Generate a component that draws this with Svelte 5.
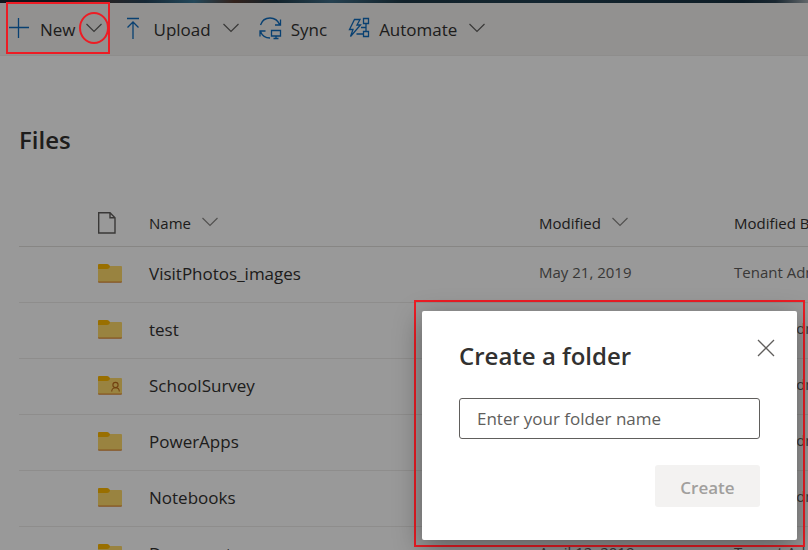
<script>
  const files = [
    { name: 'VisitPhotos_images', modified: 'May 21, 2019', by: 'Tenant Admin' },
    { name: 'test', modified: 'May 14, 2019', by: 'Tenant Admin' },
    { name: 'SchoolSurvey', modified: 'May 7, 2019', by: 'Tenant Admin', shared: true },
    { name: 'PowerApps', modified: 'April 30, 2019', by: 'Tenant Admin' },
    { name: 'Notebooks', modified: 'April 22, 2019', by: 'Tenant Admin' },
    { name: 'Documents', modified: 'April 12, 2019', by: 'Tenant Admin' }
  ];
  let folderName = $state('');
</script>

{#snippet chevron()}
  <svg class="chevron" width="16" height="12" viewBox="0 0 16 12" aria-hidden="true">
    <path d="M.5 1 8 8.500 15.500 1" />
  </svg>
{/snippet}

<div class="page">
  <div class="banner"></div>
  <nav class="toolbar">
    <div class="marked">
      <button type="button" class="command">
        <svg class="line" width="20" height="22" viewBox="0 0 20 22" aria-hidden="true"><path d="M9.500 0v20M0 9.500h20" /></svg>
        <span>New</span>
      </button>
      <button type="button" class="split" aria-label="More new items">{@render chevron()}</button>
    </div>
    <button type="button" class="command upload">
      <svg class="line" width="14" height="24" viewBox="0 0 14 24" aria-hidden="true"><path d="M1 1.500h12M7 22V5M1.500 10.500 7 5l5.500 5.500" /></svg>
      <span>Upload</span>
      {@render chevron()}
    </button>
    <button type="button" class="command sync">
      <svg class="line" width="23" height="24" viewBox="0 0 23 24" aria-hidden="true">
        <path d="M1.500 8C3 3.500 6.500 1 11 1c4.500 0 8 2.500 10 7M21.500 2.500V8H16M6.500 14H1v5.500M1.500 14.500C3 18.500 6.500 21 11 21M12.500 13.500h9v5.500h-9zM17 19v2.500M14.500 21.500h5" />
      </svg>
      <span>Sync</span>
    </button>
    <button type="button" class="command automate">
      <svg class="line" width="22" height="24" viewBox="0 0 22 24" aria-hidden="true">
        <path d="M6.500 2.500h5.500L9 8h3.500L2.500 19.500 5 12.500H1.500zM15.500 1.500h5v5h-5zM15.500 14.500h5v5h-5zM18 6.500v8M13 10.500h5M15.500 17H8.500" />
      </svg>
      <span>Automate</span>
      {@render chevron()}
    </button>
  </nav>

  <main>
    <h1>Files</h1>
    <table>
      <colgroup><col class="c-select" /><col class="c-icon" /><col /><col class="c-meta" /><col class="c-meta" /></colgroup>
      <thead>
        <tr>
          <td></td>
          <th scope="col" aria-label="File type">
            <svg class="file" width="18" height="22" viewBox="0 0 18 22" aria-hidden="true"><path d="M.7.700h11.300l5 5v15.300H.7zM12 .700v5h5" /></svg>
          </th>
          <th scope="col"><span class="head">Name {@render chevron()}</span></th>
          <th scope="col"><span class="head">Modified {@render chevron()}</span></th>
          <th scope="col"><span class="head">Modified By</span></th>
        </tr>
      </thead>
      <tbody>
        {#each files as file}
          <tr>
            <td></td>
            <td>
              <svg class="folder" width="24" height="20" viewBox="0 0 24 20" aria-hidden="true">
                <path fill="#ffda6b" d="M0 2h23q1 0 1 1v15H0z" />
                <path fill="#ffb900" d="M0 1q0-1 1-1h8c1.500 0 3 1.500 3 2.500S10.500 5 9 5H0z" />
                <path fill="#e08a35" d="M0 17.500h24q0 1.200-1 1.200H1q-1 0-1-1.200z" />
                {#if file.shared}
                  <g fill="none" stroke="#bd6b1a" stroke-width="1.100"><circle cx="17.500" cy="9" r="2.600" /><path d="M13.700 15.500c0-5 7.600-5 7.600 0" /></g>
                {/if}
              </svg>
            </td>
            <td><a href="#files">{file.name}</a></td>
            <td class="meta">{file.modified}</td>
            <td class="meta">{file.by}</td>
          </tr>
        {/each}
      </tbody>
    </table>
  </main>

  <div class="overlay">
    <div class="highlight">
      <div class="dialog" role="dialog" aria-modal="true" aria-labelledby="dialog-title">
        <header>
          <h2 id="dialog-title">Create a folder</h2>
          <button type="button" class="close" aria-label="Close">
            <svg width="18" height="18" viewBox="0 0 18 18" aria-hidden="true"><path d="m1 1 16 16M17 1 1 17" /></svg>
          </button>
        </header>
        <input type="text" aria-label="Folder name" placeholder="Enter your folder name" bind:value={folderName} />
        <footer><button type="button" class="create" disabled={!folderName}>Create</button></footer>
      </div>
    </div>
  </div>
  <div class="outline new-outline"></div>
  <div class="outline circle"></div>
</div>

<style>
  .page {
    position: relative;
    height: 100vh;
    overflow: hidden;
    background: #fff;
    color: #323130;
    font-family: "Segoe UI", "Open Sans", "Noto Sans", sans-serif;
    font-size: 17px;
    line-height: 24px;
  }
  * { box-sizing: border-box; }
  button {
    border: 0;
    padding: 0;
    background: none;
    color: inherit;
    font: inherit;
  }
  svg { display: block; flex: none; }
  .banner {
    height: 3px;
    background: linear-gradient(90deg, #20242c 0 8%, #4a3b38 12%, #26435a 18%, #3b7896 24%, #54382e 29%, #1f3947 34%, #3f6c86 41%, #1e3846 50%, #213f50 67%, #173040 92%, #2c4252 96%, #a4adb3);
  }
  .toolbar {
    display: flex;
    align-items: center;
    height: 53px;
    padding-left: 9px;
    border-bottom: 1px solid #edebe9;
    background: #f3f2f1;
  }
  .marked, .command { display: flex; align-items: center; }
  .command { gap: 11px; }
  .command span { padding-top: 2px; }
  .split { margin-left: 10px; }
  .upload { margin-left: 24px; gap: 14px; }
  .upload .chevron { margin-left: -2px; }
  .sync { margin-left: 20px; gap: 9px; }
  .automate { margin-left: 21px; gap: 9px; }
  .automate .chevron { margin-left: 3px; }
  .line { fill: none; stroke: #0f6cbd; stroke-width: 1.3; }
  .chevron { fill: none; stroke: #605e5c; stroke-width: 1.2; }
  main { padding: 68px 0 0 19px; }
  h1, h2 { margin: 0; font-size: 24px; line-height: 32px; font-weight: 600; }
  table {
    width: 100%;
    min-width: 910px;
    margin-top: 45px;
    border-collapse: collapse;
    table-layout: fixed;
  }
  .c-select { width: 79px; }
  .c-icon { width: 51px; }
  .c-meta { width: 195px; }
  th, td {
    height: 56px;
    padding: 0;
    border-bottom: 1px solid #edebe9;
    text-align: left;
    font-weight: 400;
  }
  thead td, thead th { height: 45px; border-bottom-color: #e1dfdd; }
  .head { display: flex; align-items: center; gap: 11px; font-size: 15px; }
  .head .chevron { stroke: #8a8886; }
  .file { fill: none; stroke: #605e5c; stroke-width: 1.4; }
  a { color: inherit; text-decoration: none; }
  .meta { padding-bottom: 4px; color: #605e5c; font-size: 15px; }
  .overlay {
    position: absolute;
    inset: 0;
    display: flex;
    align-items: flex-end;
    justify-content: flex-end;
    padding: 3px;
    background: rgba(0, 0, 0, 0.4);
  }
  .highlight { width: 391px; padding: 9px 6px 5px; border: 2px solid #ed1c24; }
  .dialog {
    padding: 24px 37px 33px;
    border-radius: 2px;
    background: #fff;
    box-shadow: 0 8px 28px rgba(0, 0, 0, 0.4);
  }
  header { display: flex; justify-content: space-between; margin-bottom: 26px; }
  header h2 { padding-top: 5px; }
  .close { height: 26px; margin-right: -15px; }
  .close path { stroke: #605e5c; stroke-width: 1.3; }
  input {
    display: block;
    width: 100%;
    height: 41px;
    padding: 0 17px;
    border: 1px solid #605e5c;
    border-radius: 3px;
    color: #323130;
    font: inherit;
  }
  input::placeholder { color: #605e5c; opacity: 1; }
  footer { display: flex; justify-content: flex-end; margin-top: 26px; }
  .create {
    width: 105px;
    height: 42px;
    padding-top: 3px;
    border-radius: 3px;
    background: #f3f2f1;
    color: #a19f9d;
    font-weight: 600;
  }
  .outline { position: absolute; border: 2px solid #ed1c24; pointer-events: none; }
  .new-outline { top: 2px; left: 6px; width: 104px; height: 52px; }
  .circle { top: 12px; left: 79px; width: 30px; height: 32px; border-radius: 50%; }
</style>
